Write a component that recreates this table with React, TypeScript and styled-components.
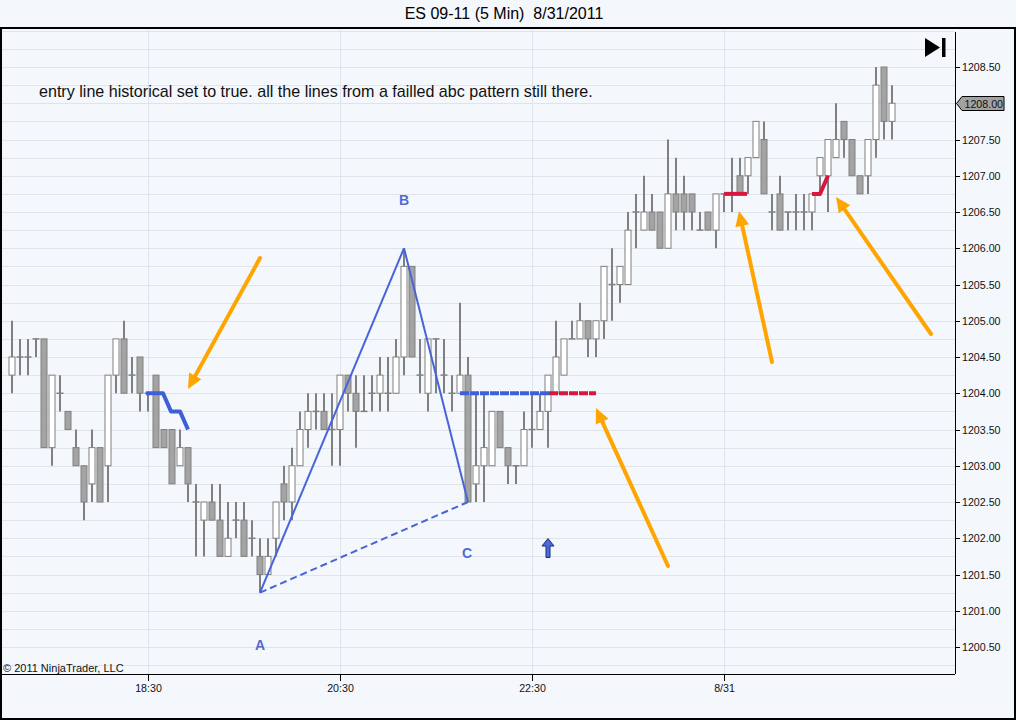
import React from 'react';
import styled, { createGlobalStyle } from 'styled-components';

const GlobalStyle = createGlobalStyle`
  html, body { margin: 0; padding: 0; background: #f4f7fb; }
  body { font-family: "Liberation Sans", Arial, sans-serif; }
`;

type Bar = [number, number, number, number]; // open, high, low, close (in ticks above 1200.00)

const BARS: Bar[] = [
  [17, 20, 16, 18], [18, 19, 17, 18], [18, 19, 17, 18], [19, 19, 18, 19], [19, 19, 13, 13],
  [13, 17, 12, 17], [16, 17, 15, 16], [15, 15, 14, 14], [13, 14, 12, 12], [12, 12, 9, 10],
  [11, 14, 10, 13], [13, 13, 10, 10], [12, 17, 10, 17], [17, 19, 16, 19], [19, 20, 16, 16],
  [17, 18, 16, 17], [18, 18, 15, 16], [16, 16, 15, 16], [17, 17, 13, 13], [14, 14, 13, 13],
  [14, 14, 11, 11], [12, 14, 12, 13], [13, 13, 10, 11], [10, 11, 7, 10], [9, 10, 7, 10],
  [10, 11, 9, 9], [9, 11, 7, 7], [7, 10, 7, 8], [9, 10, 8, 9], [9, 10, 7, 7],
  [8, 9, 7, 8], [7, 8, 5, 6], [6, 8, 6, 7], [8, 10, 7, 10], [11, 12, 9, 10],
  [10, 13, 9, 12], [12, 15, 12, 14], [14, 16, 13, 15], [15, 16, 14, 15], [15, 16, 14, 14],
  [14, 16, 12, 14], [14, 17, 12, 17], [17, 17, 15, 16], [16, 17, 13, 15], [15, 17, 15, 15],
  [16, 17, 15, 16], [16, 18, 15, 17], [16, 18, 15, 16], [16, 19, 16, 18], [18, 24, 17, 23],
  [23, 23, 18, 18], [17, 19, 16, 17], [16, 19, 15, 19], [19, 19, 16, 19], [17, 19, 16, 17],
  [16, 17, 15, 16], [16, 21, 16, 17], [17, 18, 10, 10], [11, 16, 10, 12], [12, 16, 10, 13],
  [12, 15, 12, 15], [15, 15, 13, 13], [13, 13, 11, 12], [12, 12, 11, 12], [12, 15, 12, 14],
  [14, 16, 13, 14], [14, 16, 14, 15], [15, 17, 13, 17], [16, 20, 16, 18], [17, 19, 17, 19],
  [19, 20, 19, 19], [19, 21, 19, 20], [20, 20, 18, 19], [19, 20, 18, 20], [20, 23, 19, 23],
  [22, 24, 20, 22], [22, 23, 21, 23], [22, 26, 22, 25], [26, 27, 24, 26], [25, 28, 25, 26],
  [26, 27, 25, 25], [26, 26, 24, 24], [24, 30, 24, 27], [27, 29, 25, 26], [27, 28, 25, 26],
  [27, 27, 25, 26], [25, 26, 25, 25], [26, 26, 25, 25], [25, 27, 24, 27], [27, 27, 26, 27],
  [27, 29, 26, 27], [28, 29, 27, 27], [28, 29, 27, 29], [29, 31, 29, 31], [30, 31, 27, 27],
  [26, 27, 25, 26], [27, 28, 25, 25], [26, 26, 25, 26], [26, 27, 25, 26], [26, 27, 25, 26],
  [26, 27, 25, 27], [28, 29, 27, 29], [28, 30, 26, 30], [29, 32, 29, 30], [31, 31, 29, 30],
  [30, 30, 28, 28], [28, 28, 27, 27], [28, 30, 27, 30], [30, 34, 29, 33], [34, 34, 30, 31],
  [31, 33, 30, 32],
];

const LAST_LEVEL = 32;

const yOf = (lvl: number) => 67 + (34 - lvl) * 18.125;
const xOf = (i: number) => 12 + 8 * i;

const TIME_LABELS: { x: number; t: string }[] = [
  { x: 148, t: '18:30' },
  { x: 340, t: '20:30' },
  { x: 532, t: '22:30' },
  { x: 724, t: '8/31' },
];

const Window = styled.div`
  width: 1016px;
  height: 720px;
  display: flex;
  flex-direction: column;
  background: #f4f7fb;
  overflow: hidden;
`;

const TitleBar = styled.div`
  height: 27px;
  line-height: 28px;
  font-size: 16px;
  color: #000;
  text-align: center;
  padding-right: 8px;
  white-space: pre;
`;

const ChartFrame = styled.div`
  flex: 1;
  box-sizing: border-box;
  border: 2px solid #000;
  display: grid;
  grid-template-columns: 953px 1fr;
  grid-template-rows: 645px 1fr;
`;

const PlotSvg = styled.svg`
  display: block;
  width: 953px;
  height: 645px;
`;

const PriceAxisSvg = styled.svg`
  display: block;
  width: 59px;
  height: 645px;
  overflow: visible;
`;

const TimeAxisCell = styled.div`
  border-top: 1px solid #000;
`;

const TimeAxisSvg = styled.svg`
  display: block;
  width: 953px;
  height: 43px;
`;

const GridLine = styled.line`
  stroke: #dfe4eb;
  stroke-width: 1;
`;

const Wick = styled.line`
  stroke: #808080;
  stroke-width: 2;
`;

const Body = styled.rect<{ $up: boolean }>`
  fill: ${(p) => (p.$up ? '#ffffff' : '#a3a3a3')};
  stroke: #808080;
  stroke-width: 1;
`;

const DojiTick = styled.line`
  stroke: #808080;
  stroke-width: 1.5;
`;

const PatternLine = styled.line<{ $dashed?: boolean }>`
  stroke: #4864d8;
  stroke-width: 2;
  stroke-dasharray: ${(p) => (p.$dashed ? '7 4' : 'none')};
`;

const EntryPath = styled.polyline<{ $color: string; $dashed?: boolean }>`
  fill: none;
  stroke: ${(p) => p.$color};
  stroke-width: 4;
  stroke-linejoin: round;
  stroke-dasharray: ${(p) => (p.$dashed ? '9 1' : 'none')};
`;

const PatternLabel = styled.text`
  fill: #4f6bd6;
  font-family: "Liberation Sans", Arial, sans-serif;
  font-size: 14px;
  font-weight: bold;
  text-anchor: middle;
`;

const NoteText = styled.text`
  fill: #111;
  font-family: "Liberation Sans", Arial, sans-serif;
  font-size: 16.1px;
`;

const Copyright = styled.text`
  fill: #111;
  font-family: "Liberation Sans", Arial, sans-serif;
  font-size: 11px;
`;

const AxisText = styled.text<{ $anchor?: string }>`
  fill: #111;
  font-family: "Liberation Sans", Arial, sans-serif;
  font-size: 10.67px;
  text-anchor: ${(p) => p.$anchor || 'start'};
`;

const AxisStroke = styled.line`
  stroke: #000;
  stroke-width: 1;
`;

const Marker = styled.polygon`
  fill: #a2a2a2;
  stroke: #000;
  stroke-width: 1;
`;

const ArrowShaft = styled.line`
  stroke: #ffa500;
  stroke-width: 4;
  stroke-linecap: round;
`;

const ArrowHead = styled.polygon`
  fill: #ffa500;
`;

const SignalArrow = styled.polygon`
  fill: #4a6ce0;
  stroke: #1c2a70;
  stroke-width: 1;
`;

const Glyph = styled.path`
  fill: #000;
`;

const OrangeArrow: React.FC<{ x1: number; y1: number; x2: number; y2: number }> = ({ x1, y1, x2, y2 }) => {
  const dx = x2 - x1;
  const dy = y2 - y1;
  const len = Math.hypot(dx, dy);
  const ux = dx / len;
  const uy = dy / len;
  const hl = 15;
  const hw = 7;
  const bx = x2 - ux * hl;
  const by = y2 - uy * hl;
  const px = -uy;
  const py = ux;
  const pts = `${x2},${y2} ${bx + px * hw},${by + py * hw} ${bx - px * hw},${by - py * hw}`;
  return (
    <g>
      <ArrowShaft x1={x1} y1={y1} x2={bx + ux * 2} y2={by + uy * 2} />
      <ArrowHead points={pts} />
    </g>
  );
};

const Candle: React.FC<{ i: number; bar: Bar }> = ({ i, bar }) => {
  const [o, h, l, c] = bar;
  const cx = xOf(i);
  const top = yOf(Math.max(o, c));
  const bot = yOf(Math.min(o, c));
  return (
    <g>
      <Wick x1={cx} x2={cx} y1={yOf(h)} y2={yOf(l)} />
      {o === c ? (
        <DojiTick x1={cx - 3.5} x2={cx + 3.5} y1={top} y2={top} />
      ) : (
        <Body $up={c > o} x={cx - 3} y={top} width={6} height={bot - top} />
      )}
    </g>
  );
};

const levels = Array.from({ length: 37 }, (_, k) => k);
const priceLabels = Array.from({ length: 17 }, (_, k) => 34 - 2 * k).filter((l) => l !== LAST_LEVEL);

const Plot: React.FC = () => (
  <PlotSvg viewBox="2 29 953 645">
    {levels.map((l) => (
      <GridLine key={`h${l}`} x1={2} x2={955} y1={Math.round(yOf(l)) + 0.5} y2={Math.round(yOf(l)) + 0.5} />
    ))}
    {TIME_LABELS.map((t) => (
      <GridLine key={`v${t.x}`} x1={t.x + 0.5} x2={t.x + 0.5} y1={29} y2={674} />
    ))}

    <NoteText x={39} y={97}>
      entry line historical set to true. all the lines from a failled abc pattern still there.
    </NoteText>

    {BARS.map((b, i) => (
      <Candle key={i} i={i} bar={b} />
    ))}

    {/* ABC pattern */}
    <PatternLine x1={260} y1={yOf(5)} x2={404} y2={yOf(24)} />
    <PatternLine x1={404} y1={yOf(24)} x2={468} y2={yOf(10)} />
    <PatternLine $dashed x1={260} y1={yOf(5)} x2={468} y2={yOf(10)} />
    <PatternLabel x={404} y={205}>B</PatternLabel>
    <PatternLabel x={260} y={650}>A</PatternLabel>
    <PatternLabel x={467} y={558}>C</PatternLabel>

    {/* entry lines */}
    <EntryPath $color="#3d5fd8" points={`146,${yOf(16)} 163,${yOf(16)} 171,${yOf(15)} 180,${yOf(15)} 188,${yOf(14)}`} />
    <EntryPath $color="#3d5fd8" $dashed points={`460,${yOf(16)} 549,${yOf(16)}`} />
    <EntryPath $color="#d8163e" $dashed points={`549,${yOf(16)} 596,${yOf(16)}`} />
    <EntryPath $color="#d8163e" points={`724,${yOf(27)} 747,${yOf(27)}`} />
    <EntryPath $color="#d8163e" points={`812,${yOf(27)} 820,${yOf(27)} 828,${yOf(28)}`} />

    {/* signal arrow */}
    <SignalArrow points="548,538.5 554,546 550,546 550,557.5 546,557.5 546,546 542,546" />

    {/* annotation arrows */}
    <OrangeArrow x1={260} y1={258} x2={188} y2={389} />
    <OrangeArrow x1={668} y1={566} x2={596} y2={408} />
    <OrangeArrow x1={772} y1={362} x2={739} y2={211} />
    <OrangeArrow x1={931} y1={334} x2={836} y2={197} />

    {/* go-to-end control */}
    <Glyph d="M925 38 L925 57 L940 47.5 Z M942 38 H945.5 V57 H942 Z" />

    <Copyright x={3} y={672}>© 2011 NinjaTrader, LLC</Copyright>
  </PlotSvg>
);

const PriceAxis: React.FC = () => (
  <PriceAxisSvg viewBox="955 29 59 645">
    <AxisStroke x1={955.5} x2={955.5} y1={32} y2={674} />
    {priceLabels.map((l) => (
      <g key={l}>
        <AxisStroke x1={955} x2={960} y1={Math.round(yOf(l)) + 0.5} y2={Math.round(yOf(l)) + 0.5} />
        <AxisText x={962} y={yOf(l) + 4}>{(1200 + l * 0.25).toFixed(2)}</AxisText>
      </g>
    ))}
    <Marker points="956.5,103.5 962,96.5 1004,96.5 1004,110.5 962,110.5" />
    <AxisText x={964.5} y={107.5}>{(1200 + LAST_LEVEL * 0.25).toFixed(2)}</AxisText>
  </PriceAxisSvg>
);

const TimeAxis: React.FC = () => (
  <TimeAxisCell>
    <TimeAxisSvg viewBox="2 675 953 43">
      {TIME_LABELS.map((t) => (
        <g key={t.t}>
          <AxisStroke x1={t.x + 0.5} x2={t.x + 0.5} y1={675} y2={681} />
          <AxisText $anchor="middle" x={t.x + 0.5} y={691.5}>{t.t}</AxisText>
        </g>
      ))}
    </TimeAxisSvg>
  </TimeAxisCell>
);

export default function App() {
  return (
    <>
      <GlobalStyle />
      <Window>
        <TitleBar>{'ES 09-11 (5 Min)  8/31/2011'}</TitleBar>
        <ChartFrame>
          <Plot />
          <PriceAxis />
          <TimeAxis />
          <div />
        </ChartFrame>
      </Window>
    </>
  );
}
